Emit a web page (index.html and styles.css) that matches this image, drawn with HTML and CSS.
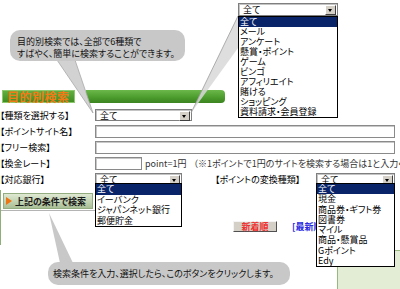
FILE: index.html
```html
<!DOCTYPE html>
<html lang="ja">
<head>
    <meta charset="UTF-8">
    <title>目的別検索</title>
    <link rel="stylesheet" href="styles.css">
</head>
<body>
    <div class="intro">
        <div class="bubble bubble-top">目的別検索では、全部で6種類で<br>すばやく、簡単に検索することができます。</div>
    </div>

    <div class="bar">
        <div class="bar-title">目的別検索</div>
        <div class="bar-gap"></div>
        <div class="bar-fill"></div>
    </div>

    <div class="form">
        <div class="row">
            <div class="label">【種類を選択する】</div>
            <div class="sel sel-kind"><span>全て</span><i class="sel-btn"></i></div>
        </div>
        <div class="row">
            <div class="label">【ポイントサイト名】</div>
            <div class="field field-wide"></div>
        </div>
        <div class="row">
            <div class="label">【フリー検索】</div>
            <div class="field field-wide"></div>
        </div>
        <div class="row">
            <div class="label">【換金レート】</div>
            <div class="field field-rate"></div>
            <span class="unit">point=1円</span>
            <span class="note">（※1ポイントで1円のサイトを検索する場合は1と入力ください）</span>
        </div>
        <div class="row">
            <div class="label">【対応銀行】</div>
            <div class="sel sel-bank"><span>全て</span><i class="sel-btn"></i></div>
            <div class="label label-type">【ポイントの変換種類】</div>
            <div class="sel sel-type"><span>全て</span><i class="sel-btn"></i></div>
        </div>
    </div>

    <div class="result">
        <div class="btn-row">
            <div class="search-btn"><b class="arrow"></b>上記の条件で検索</div>
        </div>
        <div class="sort">
            <div class="sort-btn">新着順</div>
            <span class="sort-link">[最新順]</span>
        </div>
    </div>
    <div class="list-box"></div>

    <!-- callout tails and wedge -->
    <svg class="tails" width="400" height="289" viewBox="0 0 400 289">
        <polygon points="57,60 75,60 93,113" fill="#d2d2d2" stroke="#a8a8a8" stroke-width="0.8"/>
        <polygon points="238,16 238,48 191,113" fill="#d8d8d8" opacity="0.85"/>
        <line x1="238" y1="16" x2="191" y2="113" stroke="#9c9c9c" stroke-width="0.8"/>
        <polygon points="49,213 60,263 73,263" fill="#c8c8c8"/>
    </svg>

    <div class="popup popup-kind">
        <div class="sel sel-open"><span>全て</span><i class="sel-btn"></i></div>
        <ul class="options">
            <li class="on">全て</li>
            <li>メール</li>
            <li>アンケート</li>
            <li>懸賞・ポイント</li>
            <li>ゲーム</li>
            <li>ビンゴ</li>
            <li>アフィリエイト</li>
            <li>賭ける</li>
            <li>ショッピング</li>
            <li>資料請求・会員登録</li>
        </ul>
    </div>

    <ul class="options popup-bank">
        <li class="on">全て</li>
        <li>イーバンク</li>
        <li>ジャパンネット銀行</li>
        <li>郵便貯金</li>
    </ul>

    <ul class="options popup-type">
        <li class="on">全て</li>
        <li>現金</li>
        <li>商品券・ギフト券</li>
        <li>図書券</li>
        <li>マイル</li>
        <li>商品・懸賞品</li>
        <li>Gポイント</li>
        <li>Edy</li>
    </ul>

    <div class="bubble bubble-bottom">検索条件を入力、選択したら、このボタンをクリックします。</div>
</body>
</html>
```

FILE: styles.css
```css
body {
    margin: 0;
    width: 400px;
    height: 289px;
    overflow: hidden;
    position: relative;
    background: #fff;
    color: #000;
    font-family: "Noto Sans CJK JP", sans-serif;
    font-feature-settings: "palt";
    font-size: 9px;
    line-height: 1;
}
.intro {
    height: 90px;
    padding: 30px 0 0 10px;
    box-sizing: border-box;
}
.bubble {
    background: #c8c8c8;
    border-radius: 10px;
    color: #111;
    box-sizing: border-box;
    z-index: 4;
}
.bubble-top {
    position: relative;
    width: 175px;
    height: 31px;
    padding: 6px 0 0 7px;
    line-height: 12px;
}
.bubble-bottom {
    position: absolute;
    left: 48px;
    top: 262px;
    width: 242px;
    height: 23px;
    padding: 7px 0 0 5px;
    line-height: 9px;
}
.bar {
    display: flex;
    height: 13px;
    margin-left: 2px;
}
.bar-title {
    width: 73px;
    box-sizing: border-box;
    border: 1px solid #8cc86c;
    background: linear-gradient(#62ae40, #3f8c22);
    color: #f27a16;
    font-weight: bold;
    font-size: 12px;
    line-height: 11px;
    padding-left: 4px;
    letter-spacing: 0.5px;
}
.bar-gap {
    width: 11px;
}
.bar-fill {
    width: 139px;
    background: linear-gradient(#6cb84a, #4a9a2c 60%, #3c8420);
    border-radius: 0 4px 4px 0;
}
.form {
    margin-top: 4px;
}
.row {
    display: flex;
    align-items: center;
    height: 16px;
    white-space: nowrap;
}
.label {
    width: 95px;
    flex: none;
}
.label-type {
    width: 101px;
    margin-left: 33px;
}
.sel {
    position: relative;
    height: 12px;
    box-sizing: border-box;
    border: 1px solid #7f7f7f;
    box-shadow: inset 1px 1px 0 #c4c4c4;
    background: #fff;
    padding: 1px 0 0 4px;
    line-height: 9px;
    flex: none;
}
.sel-btn {
    position: absolute;
    right: 1px;
    top: 1px;
    width: 9px;
    height: 8px;
    background: #d4d0c8;
    border: 1px solid;
    border-color: #fff #404040 #404040 #fff;
}
.sel-btn::after {
    content: "";
    position: absolute;
    left: 2px;
    top: 3px;
    border: 2.5px solid transparent;
    border-top: 3px solid #000;
    border-bottom: 0;
}
.sel-kind {
    width: 97px;
}
.sel-bank {
    width: 87px;
}
.sel-type {
    width: 79px;
}
.field {
    height: 13px;
    box-sizing: border-box;
    border: 1px solid #8a8a8a;
    box-shadow: inset 1px 1px 0 #c8c8c8;
    background: #fff;
    flex: none;
}
.field-wide {
    width: 300px;
}
.field-rate {
    width: 47px;
}
.unit {
    margin-left: 3px;
    color: #333;
}
.note {
    margin-left: 7px;
    color: #333;
}
.result {
    margin-top: 3px;
    height: 55px;
    border-left: 1px solid #8fae7a;
}
.btn-row {
    width: 94px;
    padding: 3px 0 1px 2px;
    border-bottom: 1px solid #b4b4b4;
}
.search-btn {
    display: flex;
    align-items: center;
    width: 90px;
    height: 16px;
    box-sizing: border-box;
    border: 1px solid #93ad80;
    background: linear-gradient(#dfe9d2, #a9bf96);
    color: #1a1a1a;
    font-weight: bold;
    padding-left: 2px;
}
.arrow {
    width: 0;
    height: 0;
    border-top: 4px solid transparent;
    border-bottom: 4px solid transparent;
    border-left: 6px solid #ec7412;
    margin-right: 3px;
}
.sort {
    display: flex;
    align-items: center;
    margin: 10px 0 0 232px;
}
.sort-btn {
    width: 44px;
    height: 11px;
    box-sizing: border-box;
    background: #d4d0c8;
    border: 1px solid;
    border-color: #f4f4f4 #505050 #505050 #f4f4f4;
    color: #f03030;
    font-weight: bold;
    text-align: center;
    line-height: 9px;
}
.sort-link {
    margin-left: 15px;
    color: #2a2ae0;
    font-weight: bold;
}
.list-box {
    margin: 5px 0 0 337px;
    height: 39px;
    border-top: 1px solid #98b880;
    border-left: 1px solid #98b880;
    background: #e3edd6;
}
.tails {
    position: absolute;
    left: 0;
    top: 0;
    z-index: 2;
}
.popup {
    position: absolute;
    z-index: 3;
}
.popup-kind {
    left: 238px;
    top: 3px;
    width: 100px;
}
.sel-open {
    width: 100px;
    height: 13px;
}
.options {
    list-style: none;
    margin: 0;
    padding: 0;
    border: 1px solid #000;
    background: #fff;
    white-space: nowrap;
    z-index: 3;
}
.options li {
    line-height: 10px;
    padding-left: 1px;
}
.options .on {
    background: #0a246a;
    color: #fff;
}
.popup-bank {
    position: absolute;
    left: 95px;
    top: 183px;
    width: 85px;
}
.popup-bank li {
    line-height: 10.5px;
}
.popup-type {
    position: absolute;
    left: 316px;
    top: 183px;
    width: 77px;
}
.popup-type li {
    line-height: 10.25px;
}
```
